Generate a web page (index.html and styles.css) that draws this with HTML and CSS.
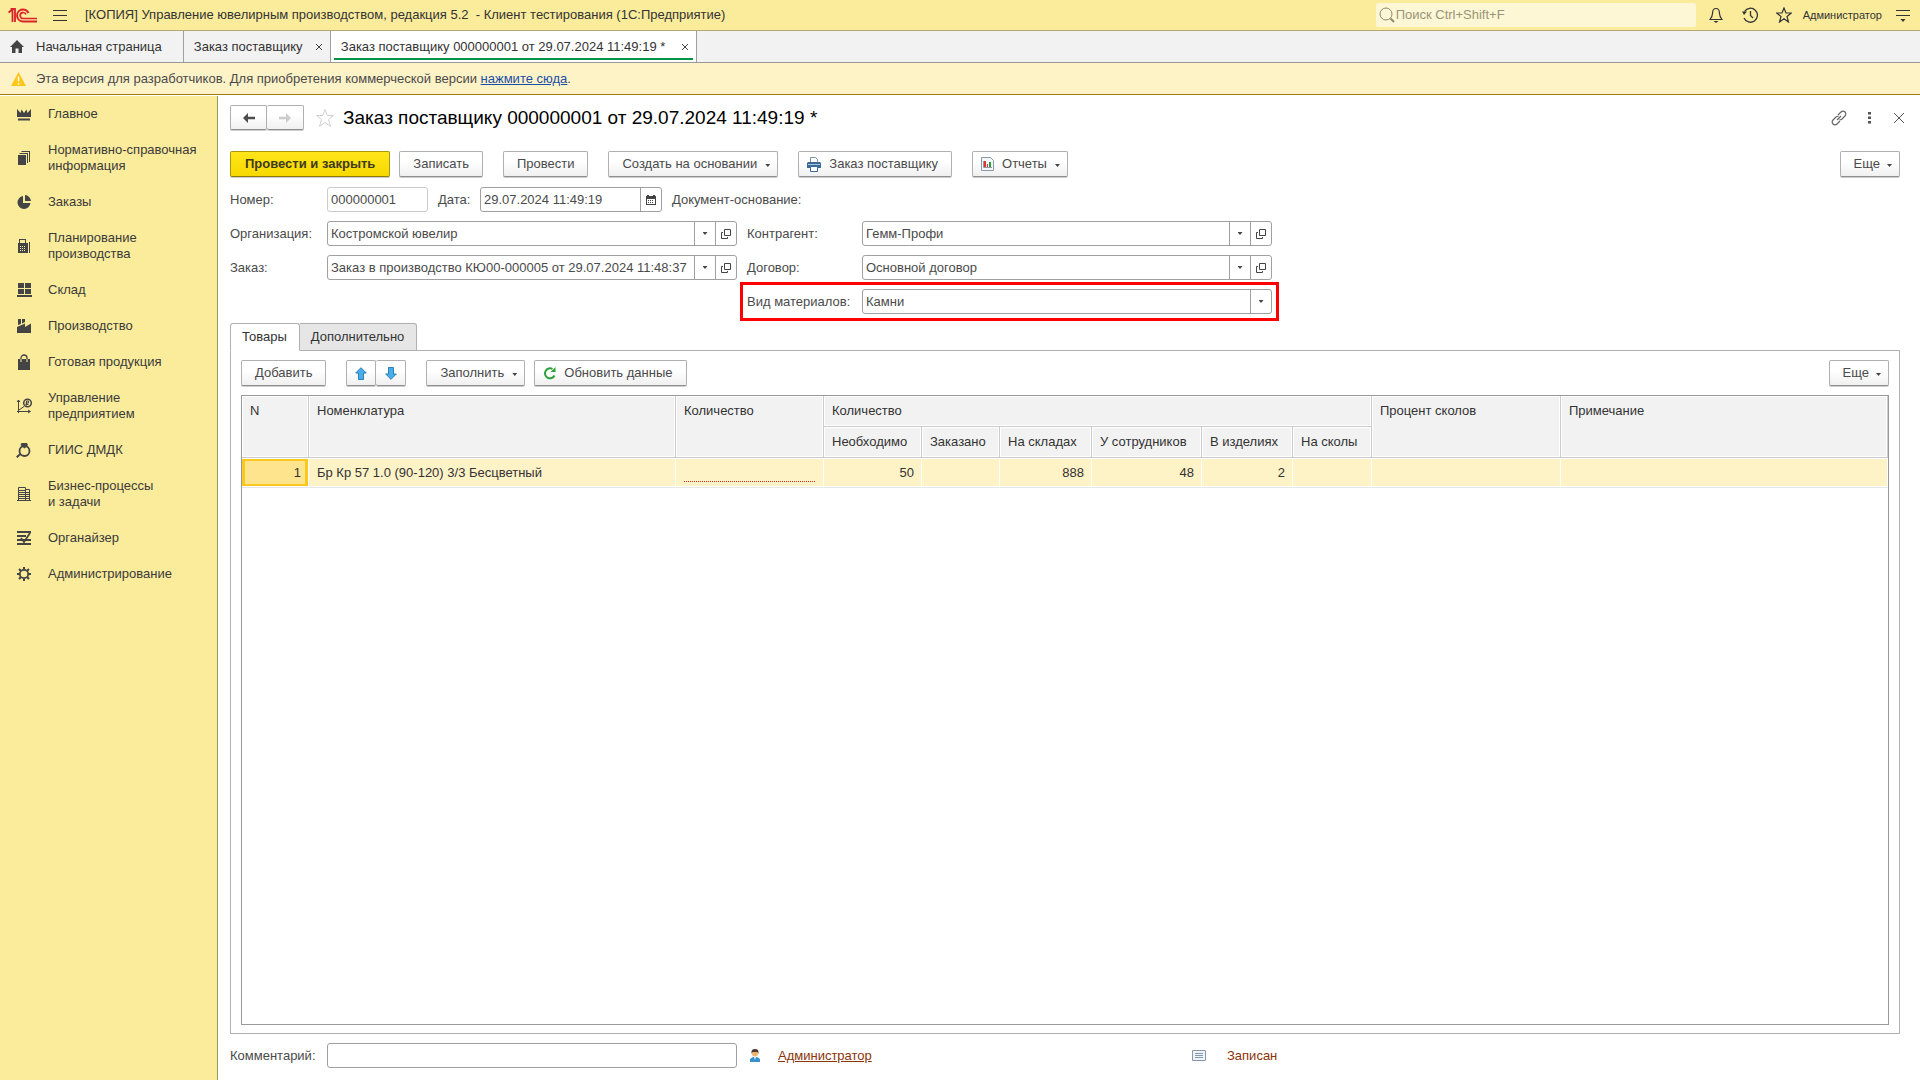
FILE: index.html
```html
<!DOCTYPE html>
<html lang="ru">
<head>
<meta charset="utf-8">
<title>Заказ поставщику 000000001 от 29.07.2024 11:49:19 *</title>
<link rel="stylesheet" href="styles.css">
</head>
<body>
<header class="topbar">
  <svg class="logo" width="29" height="15" viewBox="0 0 29 15" fill="none" stroke="#d8232a" stroke-width="2"><path d="M0.5 4.5 4.5 1.5V14M7 14V1H2.5" stroke-width="1.8"/><path d="M20.5 5A6 6 0 1 0 15.500 13.500H29"/><path d="M18 6.500A3 3 0 1 0 15.500 10.500H29" stroke-width="1.600"/></svg>
  <button class="icon-btn menu-btn" aria-label="Меню"><svg width="14" height="13" viewBox="0 0 14 13" stroke="#333" fill="none"><path d="M0 1.500H14M0 6.500H14M0 11.500H14"/></svg></button>
  <span class="app-title">[КОПИЯ] Управление ювелирным производством, редакция 5.2&nbsp; - Клиент тестирования (1С:Предприятие)</span>
  <div class="search">
    <svg width="16" height="16" viewBox="0 0 16 16" fill="none" stroke="#8f8970"><circle cx="7" cy="7" r="6"/><path d="M11.500 11.500 15 15" stroke-width="2"/></svg>
    <input type="text" class="search-input" placeholder="Поиск Ctrl+Shift+F" aria-label="Поиск">
  </div>
  <div class="top-tools">
    <button class="icon-btn" aria-label="Уведомления"><svg width="14" height="16" viewBox="0 0 14 16" fill="none" stroke="#333" stroke-width="1.200"><path d="M7 1.500C4 1.500 3.500 4 3.500 6.500 3.500 9 2.500 10.500 1 12.500H13C11.500 10.500 10.500 9 10.500 6.500 10.500 4 10 1.500 7 1.500Z"/><path d="M4.500 14H9.500L7 16Z" fill="#333" stroke="none"/></svg></button>
    <button class="icon-btn" aria-label="История"><svg width="16" height="16" viewBox="0 0 16 16" fill="none" stroke="#333" stroke-width="1.300"><path d="M2.500 4.500A7 7 0 1 1 2 11"/><path d="M8.500 4V8.500L11 11"/><path d="M0 4.500H5L2 8Z" fill="#333" stroke="none"/></svg></button>
    <button class="icon-btn" aria-label="Избранное"><svg width="16" height="16" viewBox="0 0 16 16" fill="none" stroke="#333" stroke-width="1.200"><path d="M8 1 10 6H15.300L11 9.500 12.500 15 8 11.800 3.500 15 5 9.500 0.700 6H6Z"/></svg></button>
    <span class="user-name">Администратор</span>
    <button class="icon-btn" aria-label="Настройки"><svg width="14" height="13" viewBox="0 0 14 13" stroke="#333" fill="none"><path d="M0 1.500H14M0 6.500H14"/><path d="M4.500 10H9.500L7 13Z" fill="#333" stroke="none"/></svg></button>
  </div>
</header>

<nav class="window-tabs" aria-label="Окна">
  <a href="#" class="wtab wtab-home"><svg width="14" height="13" viewBox="0 0 14 13" fill="#444"><path d="M7 0 14 7H12V13H8.500V8.500H5.500V13H2V7H0Z"/></svg>Начальная страница</a>
  <div class="wtab"><a href="#">Заказ поставщику</a><button class="tab-close" aria-label="Закрыть"><svg width="8" height="8" viewBox="0 0 8 8" stroke="#444"><path d="M1 1 7 7M7 1 1 7"/></svg></button></div>
  <div class="wtab wtab-active"><a href="#">Заказ поставщику 000000001 от 29.07.2024 11:49:19 *</a><button class="tab-close" aria-label="Закрыть"><svg width="8" height="8" viewBox="0 0 8 8" stroke="#444"><path d="M1 1 7 7M7 1 1 7"/></svg></button></div>
</nav>

<div class="notice">
  <svg width="15" height="14" viewBox="0 0 15 14"><path d="M7.500 0 15 14H0Z" fill="#ffc61a"/><path d="M7.500 4.500V9.500M7.500 11V12.500" stroke="#fff" stroke-width="1.500"/></svg>
  <span>Эта версия для разработчиков. Для приобретения коммерческой версии <a href="#">нажмите сюда</a>.</span>
</div>

<div class="workspace">
  <nav class="sidebar" aria-label="Разделы">
    <a href="#"><svg width="16" height="16" viewBox="0 0 16 16"><path d="M1 3 4.500 7 5.500 3.500 8 7 10.500 3.500 11.500 7 15 3V11H1ZM2 12.500H14V14.500H2Z"/></svg><span>Главное</span></a>
    <a href="#"><svg width="16" height="16" viewBox="0 0 16 16"><path d="M2 5H10V15H2ZM3.500 3H12V13H11V4H3.500ZM5.500 1H14V12H13V2H5.500Z"/></svg><span>Нормативно-справочная информация</span></a>
    <a href="#"><svg width="16" height="16" viewBox="0 0 16 16"><path d="M7 2A6.500 6.500 0 1 0 14.500 9H7Z"/><path d="M9 1A6.500 6.500 0 0 1 15 7H9Z"/></svg><span>Заказы</span></a>
    <a href="#"><svg width="16" height="16" viewBox="0 0 16 16"><path fill-rule="evenodd" d="M3 1H10V5H12V15H2V5H3ZM4 2V5H9V2ZM4 8V9H5V8ZM6 8V9H7V8ZM8 8V9H9V8ZM4 10V11H5V10ZM6 10V11H7V10ZM8 10V11H9V10ZM4 12V13H5V12ZM6 12V13H7V12ZM8 12V13H9V12ZM13 4H14V15H13Z"/></svg><span>Планирование производства</span></a>
    <a href="#"><svg width="16" height="16" viewBox="0 0 16 16"><path d="M2 1H8V6H2ZM9 1H15V6H9ZM2 7H8V12H2ZM9 7H15V12H9ZM1 13H16V15H1Z"/></svg><span>Склад</span></a>
    <a href="#"><svg width="16" height="16" viewBox="0 0 16 16"><path d="M2 1H5V6L2 7ZM6 1H9V4L6 5.500ZM1 15V9L9 5.500V9L15 5.500V15Z"/></svg><span>Производство</span></a>
    <a href="#"><svg width="16" height="16" viewBox="0 0 16 16"><path d="M2 5H14V16H2Z"/><path d="M5 5V4A3 3 0 0 1 11 4V5" fill="none" stroke="#444" stroke-width="1.300"/><path d="M5 5V8M11 5V8" stroke="#fbec9c"/></svg><span>Готовая продукция</span></a>
    <a href="#"><svg width="16" height="16" viewBox="0 0 16 16" fill="none" stroke="#444"><path d="M2.500 15V2M1 4 2.500 2 4 4M1 13.500H14M12 12 14.500 13.500 12 15M3 12 8 8.500"/><circle cx="11.500" cy="5" r="3.800" stroke-width="1.500"/><path d="M10.500 7.500V3H12.500V5H9.500M9.500 6.500H12.500" stroke-width="1"/></svg><span>Управление предприятием</span></a>
    <a href="#"><svg width="16" height="16" viewBox="0 0 16 16"><circle cx="8.500" cy="9" r="5" fill="none" stroke="#444" stroke-width="1.800"/><path d="M5.500 1H11L12 3 8.500 6.500 4.500 3ZM0 14.500 4 11 5 12.500 1.500 16Z"/></svg><span>ГИИС ДМДК</span></a>
    <a href="#"><svg width="16" height="16" viewBox="0 0 16 16" fill="none" stroke="#444"><path d="M2.500 14V1.500H9.500V14M9.500 3.500H13.500V14M1 14.500H15M3 4.500H9M3 6.500H9M3 8.500H9M3 10.500H9M3 12.500H9M10 6.500H13M10 8.500H13M10 10.500H13M10 12.500H13"/></svg><span>Бизнес-процессы<br>и задачи</span></a>
    <a href="#"><svg width="16" height="16" viewBox="0 0 16 16" fill="none" stroke="#444" stroke-width="2"><path d="M1 2H15M1 6H10M1 10H15M1 14H15"/><path d="M5 8 8 12 14 3" stroke-width="1.800"/></svg><span>Органайзер</span></a>
    <a href="#"><svg width="16" height="16" viewBox="0 0 16 16" fill="none" stroke="#444"><circle cx="8" cy="8" r="4.200" stroke-width="1.800"/><path d="M8 1V3.500M8 12.500V15M1 8H3.500M12.500 8H15M3 3 5 5M11 11 13 13M13 3 11 5M5 11 3 13" stroke-width="2"/></svg><span>Администрирование</span></a>
  </nav>

  <main class="form">
    <div class="title-row">
      <div class="btn-pair nav-pair">
        <button class="btn" aria-label="Назад"><svg width="14" height="10" viewBox="0 0 14 10" fill="#4d4d4d"><path d="M6 0 1 5 6 10V6.200H13V3.800H6Z"/></svg></button>
        <button class="btn" aria-label="Вперед" disabled><svg width="14" height="10" viewBox="0 0 14 10" fill="#ccc"><path d="M8 0 13 5 8 10V6.200H1V3.800H8Z"/></svg></button>
      </div>
      <button class="icon-btn fav" aria-label="В избранное"><svg width="20" height="20" viewBox="0 0 20 20" fill="none" stroke="#d0d0d0"><path d="M10 1.500 12.300 7.500H18.500L13.500 11.500 15.500 18.500 10 14.500 4.500 18.500 6.500 11.500 1.500 7.500H7.700Z"/></svg></button>
      <h1>Заказ поставщику 000000001 от 29.07.2024 11:49:19 *</h1>
      <div class="title-tools">
        <button class="icon-btn" aria-label="Ссылка"><svg width="16" height="16" viewBox="0 0 16 16" fill="none" stroke="#666" stroke-width="1.200"><path d="M7 5 10 2A2.800 2.800 0 0 1 14 6L11 9A2.800 2.800 0 0 1 8.500 9.700M9 11 6 14A2.800 2.800 0 0 1 2 10L5 7A2.800 2.800 0 0 1 7.500 6.300M6 10 10 6"/></svg></button>
        <button class="icon-btn" aria-label="Действия"><svg width="3" height="12" viewBox="0 0 3 12" fill="#555"><path d="M0 0H3V2.500H0ZM0 4.500H3V7H0ZM0 9H3V11.500H0Z"/></svg></button>
        <button class="icon-btn" aria-label="Закрыть"><svg width="10" height="10" viewBox="0 0 10 10" stroke="#555"><path d="M0 0 10 10M10 0 0 10"/></svg></button>
      </div>
    </div>

    <div class="commands">
      <button class="btn btn-primary">Провести и закрыть</button>
      <button class="btn">Записать</button>
      <button class="btn btn-spaced">Провести</button>
      <button class="btn btn-spaced btn-menu">Создать на основании<i class="caret"></i></button>
      <button class="btn btn-spaced btn-icon"><svg width="14" height="15" viewBox="0 0 14 15"><path d="M3.500 6V0.500H8.500L10.500 2.500V6" fill="#fff" stroke="#7d8fa3"/><path d="M1 5H13L14 6V11H0V6Z" fill="#3b6a98"/><path d="M1 7.500H13" stroke="#a9c3da"/><path d="M3.500 9.500H10.500V14.500H3.500Z" fill="#fff" stroke="#3b6a98"/></svg>Заказ поставщику</button>
      <button class="btn btn-spaced btn-menu btn-icon"><svg width="13" height="14" viewBox="0 0 13 14"><path d="M0.500 0.500H9.500L12.500 3.500V13.500H0.500Z" fill="#f4f7fa" stroke="#8898a8"/><path d="M4 4V10" stroke="#d33" stroke-width="2"/><path d="M6.500 7V10" stroke="#d33" stroke-width="1"/><path d="M9 5V10" stroke="#2a9a3a" stroke-width="2"/><path d="M2.500 4V10.500H11" stroke="#999" fill="none"/></svg>Отчеты<i class="caret"></i></button>
      <button class="btn btn-menu btn-more">Еще<i class="caret"></i></button>
    </div>

    <div class="fields">
      <div class="field-row">
        <div class="field-left number-date">
          <label class="lbl" for="number">Номер:</label>
          <input id="number" class="box box-readonly" type="text" value="000000001" readonly>
          <label class="date-label" for="date">Дата:</label>
          <div class="box combo date-box">
            <input id="date" type="text" value="29.07.2024 11:49:19">
            <button aria-label="Выбрать дату"><svg width="10" height="10" viewBox="0 0 10 10"><path fill="#444" fill-rule="evenodd" d="M0 1H1V0H3V1H7V0H9V1H10V10H0ZM1 4V9H9V4Z"/><path d="M2 5.500H8M2 7.500H8" stroke="#444" stroke-dasharray="1 1"/></svg></button>
          </div>
        </div>
        <span class="base-label">Документ-основание:</span>
      </div>
      <div class="field-row">
        <div class="field-left">
          <label class="lbl" for="org">Организация:</label>
          <div class="box combo"><select id="org"><option>Костромской ювелир</option></select><i class="drop"></i><button aria-label="Открыть"><svg width="10" height="10" viewBox="0 0 10 10" fill="none" stroke="#444"><path d="M3.500 0.500H9.500V6.500H3.500ZM2 3.500H0.500V9.500H6.500V8"/></svg></button></div>
        </div>
        <div class="field-right">
          <label class="lbl" for="partner">Контрагент:</label>
          <div class="box combo"><select id="partner"><option>Гемм-Профи</option></select><i class="drop"></i><button aria-label="Открыть"><svg width="10" height="10" viewBox="0 0 10 10" fill="none" stroke="#444"><path d="M3.500 0.500H9.500V6.500H3.500ZM2 3.500H0.500V9.500H6.500V8"/></svg></button></div>
        </div>
      </div>
      <div class="field-row">
        <div class="field-left">
          <label class="lbl" for="order">Заказ:</label>
          <div class="box combo"><select id="order"><option>Заказ в производство КЮ00-000005 от 29.07.2024 11:48:37</option></select><i class="drop"></i><button aria-label="Открыть"><svg width="10" height="10" viewBox="0 0 10 10" fill="none" stroke="#444"><path d="M3.500 0.500H9.500V6.500H3.500ZM2 3.500H0.500V9.500H6.500V8"/></svg></button></div>
        </div>
        <div class="field-right">
          <label class="lbl" for="contract">Договор:</label>
          <div class="box combo"><select id="contract"><option>Основной договор</option></select><i class="drop"></i><button aria-label="Открыть"><svg width="10" height="10" viewBox="0 0 10 10" fill="none" stroke="#444"><path d="M3.500 0.500H9.500V6.500H3.500ZM2 3.500H0.500V9.500H6.500V8"/></svg></button></div>
        </div>
      </div>
      <div class="field-row">
        <div class="field-left"></div>
        <div class="field-right highlighted">
          <label class="lbl" for="kind">Вид материалов:</label>
          <div class="box combo"><select id="kind"><option>Камни</option></select><i class="drop"></i></div>
        </div>
      </div>
    </div>

    <div class="tabs" role="tablist">
      <button class="tab tab-current" role="tab" aria-selected="true">Товары</button>
      <button class="tab" role="tab" aria-selected="false">Дополнительно</button>
    </div>
    <section class="panel">
      <div class="commands">
        <button class="btn">Добавить</button>
        <div class="btn-pair btn-spaced">
          <button class="btn" aria-label="Вверх"><svg width="12" height="13" viewBox="0 0 12 13" fill="#46aeea" stroke="#2b7fb4"><path d="M6 0.700 11.300 6H8.500V12.500H3.500V6H0.700Z"/></svg></button>
          <button class="btn" aria-label="Вниз"><svg width="12" height="13" viewBox="0 0 12 13" fill="#46aeea" stroke="#2b7fb4"><path d="M6 12.300 0.700 7H3.500V0.500H8.500V7H11.300Z"/></svg></button>
        </div>
        <button class="btn btn-spaced btn-menu">Заполнить<i class="caret"></i></button>
        <button class="btn btn-icon"><svg width="13" height="14" viewBox="0 0 13 14" fill="none" stroke="#2fa13a" stroke-width="2"><path d="M11.500 9.500A5 5 0 1 1 9.500 3"/><path d="M12.500 1V6H7.500Z" fill="#2fa13a" stroke="none"/></svg>Обновить данные</button>
        <button class="btn btn-menu btn-more">Еще<i class="caret"></i></button>
      </div>
      <div class="table-frame">
        <table>
          <colgroup><col class="c-n"><col class="c-item"><col class="c-qty"><col class="c-need"><col class="c-ordered"><col class="c-stock"><col class="c-staff"><col class="c-goods"><col class="c-chips"><col class="c-percent"><col></colgroup>
          <thead>
            <tr><th rowspan="2">N</th><th rowspan="2">Номенклатура</th><th rowspan="2">Количество</th><th colspan="6">Количество</th><th rowspan="2">Процент сколов</th><th rowspan="2">Примечание</th></tr>
            <tr><th>Необходимо</th><th>Заказано</th><th>На складах</th><th>У сотрудников</th><th>В изделиях</th><th>На сколы</th></tr>
          </thead>
          <tbody>
            <tr><td class="num selected">1</td><td>Бр Кр 57 1.0 (90-120) 3/3 Бесцветный</td><td><span class="required"></span></td><td class="num">50</td><td></td><td class="num">888</td><td class="num">48</td><td class="num">2</td><td></td><td></td><td></td></tr>
          </tbody>
        </table>
      </div>
    </section>

    <footer class="form-footer">
      <div class="field-left">
        <label class="lbl" for="comment">Комментарий:</label>
        <input id="comment" class="box comment" type="text">
      </div>
      <div class="author">
        <svg width="10" height="13" viewBox="0 0 10 13"><path d="M0 13V10L3 8H7L10 10V13Z" fill="#3792cb"/><path d="M4 8H6L5 11Z" fill="#fff"/><circle cx="5" cy="4.500" r="3" fill="#f0b36b"/><path d="M1.500 5V3A3.500 3 0 0 1 8.500 3V5L7.500 3H2.500Z" fill="#4b3b2c"/></svg>
        <a href="#">Администратор</a>
      </div>
      <div class="status">
        <svg width="14" height="11" viewBox="0 0 14 11"><path d="M0.500 0.500H13.500V10.500H0.500Z" fill="#eef3f8" stroke="#8898ac"/><path d="M3 3.500H11M3 5.500H11M3 7.500H11" stroke="#8898ac"/></svg>
        <span>Записан</span>
      </div>
    </footer>
  </main>
</div>
</body>
</html>
```
FILE: styles.css
```css
* { box-sizing: border-box; }

body {
  margin: 0;
  min-height: 100vh;
  display: flex;
  flex-direction: column;
  font: 13px/16px "Liberation Sans", Arial, sans-serif;
  color: #4a4a4a;
  background: #fff;
}

button, input, select { font: inherit; color: inherit; }
svg { display: block; flex: none; }
a { color: inherit; text-decoration: none; }

.icon-btn, .tab-close {
  display: flex;
  align-items: center;
  justify-content: center;
  padding: 0;
  border: 0;
  background: none;
}

/* Application header */
.topbar {
  display: flex;
  align-items: center;
  height: 31px;
  padding: 0 10px 0 8px;
  background: #fbec9c;
  border-bottom: 1px solid #b3a874;
}
.menu-btn { margin: 0 18px 0 16px; }
.app-title { flex: 1; white-space: nowrap; color: #333; }
.search {
  display: flex;
  align-items: center;
  gap: 1px;
  width: 320px;
  height: 24px;
  padding: 0 3px;
  background: #fdf7d5;
  border-radius: 2px;
}
.search-input { flex: 1; padding: 0; border: 0; outline: 0; background: none; }
.search-input::placeholder { color: #999478; opacity: 1; }
.top-tools { display: flex; align-items: center; }
.top-tools .icon-btn { width: 34px; }
.top-tools .icon-btn:first-child { margin-left: 3px; }
.top-tools .icon-btn:last-child { width: 14px; margin-left: 14px; }
.user-name { margin-left: 2px; font-size: 11px; color: #333; }

/* Open windows */
.window-tabs {
  display: flex;
  height: 32px;
  background: #f2f2f2;
  border-bottom: 1px solid #999;
  color: #333;
}
.wtab {
  display: flex;
  align-items: center;
  justify-content: space-between;
  gap: 12px;
  min-width: 147px;
  padding: 0 7px 0 10px;
  border-right: 1px solid #a0a0a0;
  white-space: nowrap;
}
.wtab-home { padding-right: 21px; }
.wtab-active {
  min-width: 366px;
  background: linear-gradient(#009646, #009646) center bottom 2px / calc(100% - 6px) 2px no-repeat #fff;
}

/* Developer licence notice */
.notice {
  display: flex;
  align-items: center;
  gap: 10px;
  height: 32px;
  padding: 0 11px;
  background: #fef2c7;
  border-bottom: 1px solid #9c7d1c;
}
.notice a { color: #1a4fa8; text-decoration: underline; }

.workspace { flex: 1; display: flex; padding-top: 1px; }

/* Sections */
.sidebar {
  flex: none;
  width: 218px;
  background: #fbec9c;
  border-right: 1px solid #a0945c;
  color: #3a3a3a;
}
.sidebar a { display: flex; align-items: center; gap: 16px; padding: 10px 16px; }
.sidebar svg { fill: #444; }
.sidebar svg[fill="none"] { fill: none; }

/* Document form */
.form {
  flex: 1;
  min-width: 0;
  display: flex;
  flex-direction: column;
  padding: 9px 20px 12px 12px;
}
.title-row { display: flex; align-items: center; height: 25px; }
.title-row h1 { flex: 1; margin: 0 0 0 8px; font-size: 19px; line-height: 22px; font-weight: 400; color: #000; }
.fav { margin-left: 11px; }
.title-tools { display: flex; align-items: center; }
.title-tools .icon-btn { width: 30px; }
.title-tools .icon-btn:last-child { width: 10px; margin-left: 10px; margin-right: -4px; }

.btn {
  display: flex;
  align-items: center;
  justify-content: center;
  height: 26px;
  padding: 0 13px;
  border: 1px solid #b0b0b0;
  border-bottom-color: #8f8f8f;
  border-radius: 2px;
  background: linear-gradient(#fff 40%, #f0f0f0);
  box-shadow: 0 1px 0 #ccc;
  white-space: nowrap;
}
.btn-primary {
  padding: 0 14px;
  border-color: #a8960a;
  border-bottom-color: #8f7d00;
  background: linear-gradient(#ffe61a, #f7d800);
  font-weight: 700;
  color: #3f3a20;
}
.btn-pair { display: flex; }
.btn-pair .btn { width: 30px; padding: 0; }
.btn-pair .btn + .btn { border-left: 0; }
.nav-pair .btn { width: 37px; height: 25px; }
.btn-spaced { margin-left: 11px; }
.btn-menu { gap: 8px; padding-right: 7px; }
.btn-icon { gap: 8px; padding-left: 8px; }
.btn-more { gap: 7px; margin-left: auto; }
.caret, .drop::before {
  width: 5px;
  height: 3px;
  background: #444;
  clip-path: polygon(0 0, 100% 0, 50% 100%);
}
.caret { margin-top: 3px; }

.commands { display: flex; gap: 9px; }
.title-row + .commands { margin-top: 21px; }

/* Header fields */
.fields { display: flex; flex-direction: column; gap: 9px; margin-top: 10px; }
.field-row { display: flex; gap: 10px; min-height: 25px; }
.field-left, .field-right { display: flex; align-items: center; flex: none; }
.field-left { width: 507px; }
.field-right { width: 525px; }
.lbl { flex: none; width: 97px; }
.field-right .lbl { width: 115px; }
.box { height: 25px; border: 1px solid #a0a0a0; border-radius: 3px; background: #fff; }
.box-readonly { width: 101px; padding: 0 3px; border-color: #ccc; }
.number-date { width: 432px; }
.date-label { width: 52px; padding-left: 10px; }
.base-label { align-self: center; }

.combo { display: flex; flex: 1; min-width: 0; overflow: hidden; }
.combo input, .combo select {
  flex: 1;
  min-width: 0;
  width: 0;
  padding: 0 3px;
  border: 0;
  outline: 0;
  background: none;
  appearance: none;
}
.combo button, .drop {
  display: flex;
  align-items: center;
  justify-content: center;
  flex: none;
  width: 21px;
  padding: 0;
  border: 0;
  border-left: 1px solid #a0a0a0;
  background: none;
}
.drop { pointer-events: none; }
.drop::before { content: ""; }
.highlighted { outline: 3px solid #f00; outline-offset: 4px; }

/* Form pages */
.tabs { position: relative; z-index: 1; display: flex; margin-top: 9px; }
.tab {
  height: 28px;
  padding: 0 12px 0 11px;
  border: 1px solid #b0b0b0;
  border-left: 0;
  border-radius: 0 3px 0 0;
  background: #e6e6e6;
  color: #333;
}
.tab-current {
  border-left: 1px solid #b0b0b0;
  border-bottom-color: #fff;
  border-radius: 3px 3px 0 0;
  background: #fff;
}
.panel {
  flex: 1;
  display: flex;
  flex-direction: column;
  margin-top: -1px;
  padding: 9px 10px 8px;
  border: 1px solid #b0b0b0;
}

.table-frame { flex: 1; margin-top: 9px; border: 1px solid #999; }
table { width: 100%; table-layout: fixed; border-spacing: 0; color: #333; }
th, td { height: 30px; padding: 0 8px; overflow: hidden; white-space: nowrap; text-align: left; font-weight: 400; }
th {
  height: 31px;
  padding-top: 7px;
  vertical-align: top;
  background: #f2f2f2;
  border-right: 1px solid #ccc;
  border-bottom: 1px solid #ccc;
  box-shadow: inset 0 0 0 1px #fff;
}
td {
  background: #fef2c7;
  border-right: 1px solid #fff;
  border-bottom: 1px solid #e6e6e6;
  box-shadow: inset 0 1px #fff, inset 0 -1px #fff;
}
.num { padding-right: 7px; text-align: right; }
.selected { background: #fee48c; box-shadow: inset 0 1px #fff, inset 0 -1px #fff, inset 0 0 0 3px #fcc81e; }
.required { display: block; height: 19px; border-bottom: 1px dotted #d22; }
.c-n { width: 67px; }
.c-item { width: 367px; }
.c-qty { width: 148px; }
.c-need { width: 98px; }
.c-ordered { width: 78px; }
.c-stock { width: 92px; }
.c-staff { width: 110px; }
.c-goods { width: 91px; }
.c-chips { width: 79px; }
.c-percent { width: 189px; }

/* Footer */
.form-footer { display: flex; align-items: center; margin-top: 9px; }
.comment { flex: 1; min-width: 0; }
.author, .status { display: flex; align-items: center; color: #8a3408; }
.author { gap: 18px; width: 442px; margin-left: 13px; }
.author a { text-decoration: underline; }
.status { gap: 21px; }
```
